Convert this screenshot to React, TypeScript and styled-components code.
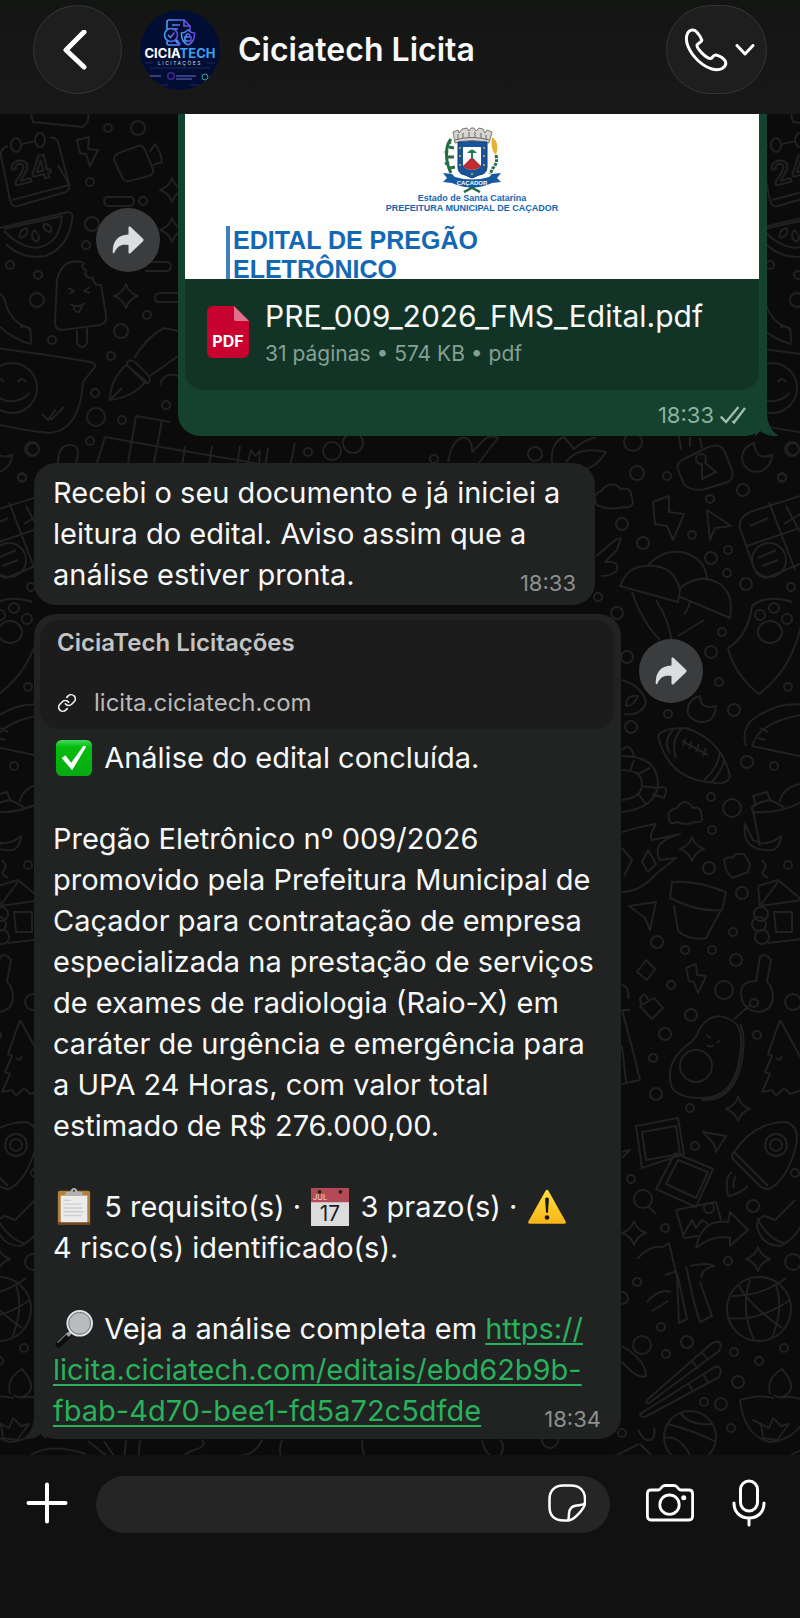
import styled, { createGlobalStyle } from "styled-components";
import { Link as LinkGlyph } from "lucide-react";

function App() {
    return (
        <>
            <GlobalStyle/>
            <Page>
                <Header>
                    <RoundButton aria-label="Voltar">
                        <BackIcon/>
                    </RoundButton>
                    <Avatar/>
                    <Title>Ciciatech Licita</Title>
                    <RoundButton $wide aria-label="Ligar">
                        <PhoneIcon/>
                        <ChevronIcon/>
                    </RoundButton>
                </Header>
                <Chat>
                    <Wallpaper/>
                    <Row $mine>
                        <ForwardButton $offset={94} aria-label="Encaminhar documento">
                            <ForwardIcon/>
                        </ForwardButton>
                        <SentBubble>
                            <DocumentPreview>
                                <Crest/>
                                <DocumentOrg>Estado de Santa Catarina</DocumentOrg>
                                <DocumentOrg>PREFEITURA MUNICIPAL DE CAÇADOR</DocumentOrg>
                                <DocumentTitle>EDITAL DE PREGÃO<br/>ELETRÔNICO</DocumentTitle>
                            </DocumentPreview>
                            <FileCard>
                                <PdfIcon/>
                                <FileInfo>
                                    <FileName>PRE_009_2026_FMS_Edital.pdf</FileName>
                                    <FileMeta>31 páginas • 574 KB • pdf</FileMeta>
                                </FileInfo>
                            </FileCard>
                            <SentStatus>
                                <time>18:33</time>
                                <ChecksIcon/>
                            </SentStatus>
                            <Tail $side="right"/>
                        </SentBubble>
                    </Row>
                    <Row>
                        <TextBubble>
                            <Paragraph>
                                Recebi o seu documento e já iniciei a<br/>
                                leitura do edital. Aviso assim que a<br/>
                                análise estiver pronta.
                                <Time>18:33</Time>
                            </Paragraph>
                        </TextBubble>
                    </Row>
                    <Row>
                        <LinkBubble>
                            <LinkCard>
                                <LinkTitle>CiciaTech Licitações</LinkTitle>
                                <LinkHost>
                                    <LinkGlyph size={20} color="#f0f0f0"/>
                                    licita.ciciatech.com
                                </LinkHost>
                            </LinkCard>
                            <MessageBody>
                                <Paragraph><CheckEmoji/> Análise do edital concluída.</Paragraph>
                                <Paragraph>
                                    Pregão Eletrônico nº 009/2026<br/>
                                    promovido pela Prefeitura Municipal de<br/>
                                    Caçador para contratação de empresa<br/>
                                    especializada na prestação de serviços<br/>
                                    de exames de radiologia (Raio-X) em<br/>
                                    caráter de urgência e emergência para<br/>
                                    a UPA 24 Horas, com valor total<br/>
                                    estimado de R$ 276.000,00.
                                </Paragraph>
                                <Paragraph>
                                    <ClipboardEmoji/> 5 requisito(s) · <CalendarEmoji/> 3 prazo(s) · <WarningEmoji/><br/>
                                    4 risco(s) identificado(s).
                                </Paragraph>
                                <Paragraph>
                                    <MagnifierEmoji/> Veja a análise completa em{" "}
                                    <Link href="https://licita.ciciatech.com/editais/ebd62b9b-fbab-4d70-bee1-fd5a72c5dfde">
                                        https://<br/>licita.ciciatech.com/editais/ebd62b9b-<br/>fbab-4d70-bee1-fd5a72c5dfde
                                    </Link>
                                    <Time>18:34</Time>
                                </Paragraph>
                            </MessageBody>
                            <Tail $side="left"/>
                        </LinkBubble>
                        <ForwardButton $offset={25} aria-label="Encaminhar mensagem">
                            <ForwardIcon/>
                        </ForwardButton>
                    </Row>
                </Chat>
                <Composer>
                    <IconButton aria-label="Anexar">
                        <PlusIcon/>
                    </IconButton>
                    <InputPill>
                        <MessageInput aria-label="Mensagem"/>
                        <IconButton aria-label="Figurinhas">
                            <StickerIcon/>
                        </IconButton>
                    </InputPill>
                    <Tools>
                        <IconButton aria-label="Câmera">
                            <CameraIcon/>
                        </IconButton>
                        <IconButton aria-label="Gravar áudio">
                            <MicIcon/>
                        </IconButton>
                    </Tools>
                </Composer>
            </Page>
        </>
    )
}

export default App

// icons

const BackIcon = () => (
    <svg width="30" height="40" viewBox="0 0 30 40" fill="none" stroke="#fff" strokeWidth="5" strokeLinecap="round" strokeLinejoin="round">
        <path d="M21 2 3 20l18 17"/>
    </svg>
)

const PhoneIcon = () => (
    <svg width="44" height="44" viewBox="0 0 44 44" fill="none" stroke="#fff" strokeWidth="3" strokeLinejoin="round">
        <path d="M4 4.500C6 2 9.500 .8 12.500 3.800C15 6.500 17 9.600 17.800 12C18.300 14 13 15.500 13 17.500C13 21 22.500 30.600 26.500 30.600C28.500 30.600 29 26.500 32 27C35.500 27.600 40 30.500 41.300 33.200C42.600 36 41 38.500 38.500 40.300C33 43.500 24 41.500 14.500 33C5 24 -.5 12 4 4.500Z"/>
    </svg>
)

const ChevronIcon = () => (
    <svg width="20" height="12" viewBox="0 0 20 12" fill="none" stroke="#fff" strokeWidth="3" strokeLinecap="round" strokeLinejoin="round">
        <path d="m2 1.500 8 8.500 8-8.500"/>
    </svg>
)

const ForwardIcon = () => (
    <svg width="32" height="28" viewBox="0 0 32 28" fill="#dcdddf">
        <path d="M16.500 1.500c0-1 1-1.500 2-.7l12.500 12c.8.800.8 1.600 0 2.400l-12.500 12c-1 .800-2 .3-2-.7v-7.500C9 18 5.500 20 2.500 26.500c-.6 1.200-1.800.9-1.800-.5C.7 16 5 9 16.500 8.500z"/>
    </svg>
)

const ChecksIcon = () => (
    <svg width="26" height="18" viewBox="0 0 26 18" fill="none" stroke="#9fbcae" strokeWidth="2.400">
        <path d="M.8 10.500 6 16 18.500 1M12.500 15l1.500 1.500L25 2"/>
    </svg>
)

const PdfIcon = () => (
    <svg width="42" height="52" viewBox="0 0 42 52">
        <path d="M6 0h21l15 15v31a6 6 0 0 1-6 6H6a6 6 0 0 1-6-6V6a6 6 0 0 1 6-6z" fill="#c8032f"/>
        <path d="M27 0l15 15H29a2 2 0 0 1-2-2z" fill="#e0718a"/>
        <text x="21" y="41" fill="#fff" fontFamily="Inter, sans-serif" fontSize="16" fontWeight="700" textAnchor="middle">PDF</text>
    </svg>
)

const PlusIcon = () => (
    <svg width="42" height="42" viewBox="0 0 42 42" stroke="#fff" strokeWidth="4" strokeLinecap="round">
        <path d="M21 2.500v37M2.500 21h37"/>
    </svg>
)

const StickerIcon = () => (
    <svg width="38" height="38" viewBox="0 0 38 38" fill="none" stroke="#fff" strokeWidth="2.500" strokeLinejoin="round">
        <path d="M20 36.500h-4C6 36.500 1.500 31 1.500 23v-8C1.500 6.500 7 1.500 15 1.500h8c8.500 0 14 5 14 13.500v4c0 5-11 17.500-17 17.500z"/>
        <path d="M20 36.500c1-1.500.8-4 1-7 .4-5 2.500-7.500 7.500-8 4-.4 7-.5 8.500-2.500"/>
    </svg>
)

const CameraIcon = () => (
    <svg width="48" height="38" viewBox="0 0 48 38" fill="none" stroke="#fff" strokeWidth="2.800" strokeLinejoin="round">
        <path d="M5 6h7c2 0 2.500-1 3.500-2.500S17.500 1.500 19 1.500h9c1.500 0 2.500.5 3.500 2S33 6 35 6h8c2.500 0 3.600 1.500 3.600 4v22c0 2.500-1.100 4-3.600 4H5c-2.500 0-3.600-1.500-3.600-4V10c0-2.500 1.100-4 3.600-4z"/>
        <circle cx="23.500" cy="20.700" r="9.700"/>
        <circle cx="37.700" cy="13.700" r="2.500" fill="#fff" stroke="none"/>
    </svg>
)

const MicIcon = () => (
    <svg width="34" height="48" viewBox="0 0 34 48" fill="none" stroke="#fff" strokeWidth="3" strokeLinecap="round">
        <rect x="8.500" y="2" width="17" height="30" rx="8.500"/>
        <path d="M2 24c0 9 6 15 15 15s15-6 15-15M17 39v7"/>
    </svg>
)

const Avatar = () => (
    <svg width="80" height="80" viewBox="0 0 80 80" role="img" aria-label="Ciciatech Licitações">
        <defs>
            <clipPath id="avatar-clip"><circle cx="40" cy="40" r="40"/></clipPath>
            <linearGradient id="avatar-line" x1="0" x2="1">
                <stop offset="0" stopColor="#3fa4f5"/>
                <stop offset="1" stopColor="#6b45e0"/>
            </linearGradient>
        </defs>
        <g clipPath="url(#avatar-clip)">
            <rect width="80" height="80" fill="#020d33"/>
            <g fill="none" stroke="url(#avatar-line)" strokeWidth="1.600">
                <path d="M27 19v-7q0-2 2-2h15l6 6v6M44 10v6h6M27 31v2q0 2 2 2h11M32 15h8M32 19h6"/>
                <circle cx="31" cy="25" r="6.500"/>
                <path d="m28 25 2.500 2.500 4-5"/>
                <path d="m36 30 4 5" strokeWidth="3"/>
                <path d="M48 20q3 3 6.500 3 .5 9-6.500 12-7-3-6.500-12 3.500 0 6.500-3z"/>
                <path d="M45 27h6v4h-6zM46 27q0-3 2-3t2 3"/>
            </g>
            <text x="40" y="48" fontFamily="Inter, sans-serif" fontSize="13" fontWeight="700" textAnchor="middle" fill="#fff">
                CICIA<tspan fill="#3fa0ee">TECH</tspan>
            </text>
            <text x="40" y="55" fontFamily="Inter, sans-serif" fontSize="5" textAnchor="middle" letterSpacing="1.500" fill="#cfd6ea">LICITAÇÕES</text>
            <path d="M5 53h8M67 53h8M10 58h60M16 75h12M50 75h12" stroke="#1c2a5c" strokeWidth="1"/>
            <path d="M8 66h13M36 66h20M36 69h16M70 66h5" stroke="#4a4f9c" strokeWidth="1.500"/>
            <rect x="28" y="63" width="6" height="6" rx="1" fill="none" stroke="#6a35c0"/>
            <circle cx="65" cy="67" r="3" fill="none" stroke="#35a9a4"/>
        </g>
    </svg>
)

const Crest = () => (
    <svg width="60" height="66" viewBox="0 0 60 66" role="img" aria-label="Brasão de Caçador">
        <path d="M11 5l5-2 1 3 3-4 5-1 2 3 2-3h3l2 3 3-3 4 1 2 4 2-3 5 2-3 11q-18-5-34 0z" fill="#d7d5d2" stroke="#5f5a57" strokeWidth=".8"/>
        <path d="M16 7v5M21 6v5M27 5v5M33 5v5M39 6v5M44 8v4M13 13q17-5 34 0" stroke="#6a6461" strokeWidth="1" fill="none"/>
        <path d="M9 12c-6 7-6 22 0 34M9 15l-4 2M7 20l5 1M6 26l-3-2M6 30l6 0M7 35l-4 2M8 41l5-1" stroke="#256c45" strokeWidth="3" fill="none"/>
        <path d="M54 28q2 8-3 13l-3 6" stroke="#256c45" strokeWidth="3" fill="none" strokeDasharray="3 1"/>
        <path d="M50 10q8 5 4 18-6-5-4-18z" fill="#e6b233"/>
        <path d="M16 15q14 0 14-1 0 1 15 1v25q0 7-8 8l-7 3-7-3q-7-1-7-8z" fill="#15549b" stroke="#123b70"/>
        <path d="M21 20h18v17q0 5-9 6-9-1-9-6z" fill="#fff"/>
        <path d="m21 39 9-9 9 9q-2 3-9 4-7-1-9-4z" fill="#c02d31"/>
        <path d="M27 24q3-3 6 0l2 2H25zM29 26h2v6h-2z" fill="#277d52"/>
        <g fill="#d9b841"><circle cx="18" cy="21" r="1"/><circle cx="18" cy="29" r="1"/><circle cx="18" cy="38" r="1"/><circle cx="42" cy="21" r="1"/><circle cx="42" cy="29" r="1"/><circle cx="42" cy="38" r="1"/><circle cx="30" cy="47" r="1"/></g>
        <path d="m22 65 15-8M38 65l-15-8" stroke="#256c45" strokeWidth="2.500"/>
        <path d="m1 46 9 1 3 3q17 5 34 0l3-3 9-1-4 5 4 4-9 1-5 2q-15 5-30 0l-5-2-9-1 4-4z" fill="#17599e"/>
        <text x="30" y="58" fontFamily="Liberation Sans, sans-serif" fontSize="6" fontWeight="700" textAnchor="middle" fill="#fff">CAÇADOR</text>
    </svg>
)

// emoji drawn at the size of a text line

const CheckEmoji = () => (
    <Emoji viewBox="0 0 40 40" aria-label="concluído">
        <defs>
            <linearGradient id="check-fill" x2="0" y2="1">
                <stop offset="0" stopColor="#45d95b"/>
                <stop offset=".2" stopColor="#05bd0d"/>
                <stop offset="1" stopColor="#08a913"/>
            </linearGradient>
        </defs>
        <rect x="1" y="1" width="38" height="38" rx="6" fill="url(#check-fill)"/>
        <path d="m7 20 4-3 6 8L30 7l3 1-15 25z" fill="#fff"/>
    </Emoji>
)

const ClipboardEmoji = () => (
    <Emoji viewBox="0 0 40 40" aria-label="requisitos">
        <rect x="3" y="3" width="34" height="36" rx="2" fill="#b1803f"/>
        <path d="M3 36h34v1q0 2-2 2H5q-2 0-2-2z" fill="#6f4720"/>
        <path d="M6 8h28v28H6z" fill="#ececec"/>
        <path d="M9 13h8M9 17h19M9 21h20M9 25h21M9 29h19" stroke="#cdcdcd" strokeWidth="1.500"/>
        <path d="M11 8V5q0-1 3-1h2q1-4 4-4t4 4h2q3 0 3 1v3z" fill="#aeb2b5"/>
        <circle cx="20" cy="3" r="1.200" fill="#444"/>
    </Emoji>
)

const CalendarEmoji = () => (
    <Emoji viewBox="0 0 40 40" aria-label="prazos">
        <path d="M0 0h40v40H0z" fill="#dcdcdc"/>
        <path d="M0 0h40v15H0z" fill="#b34b56"/>
        <circle cx="9" cy="4" r="2" fill="#222"/>
        <circle cx="31" cy="4" r="2" fill="#222"/>
        <text x="2" y="13" fontFamily="Inter, sans-serif" fontSize="8" fill="#f3dcdf">JUL</text>
        <text x="20" y="35" fontFamily="Inter, sans-serif" fontSize="22" textAnchor="middle" fill="#1d1d1d">17</text>
    </Emoji>
)

const WarningEmoji = () => (
    <Emoji viewBox="0 0 40 40" aria-label="riscos">
        <defs>
            <linearGradient id="warning-fill" x2="0" y2="1">
                <stop offset="0" stopColor="#ffe03c"/>
                <stop offset="1" stopColor="#f8b518"/>
            </linearGradient>
        </defs>
        <path d="M18.500 3q1.500-2.500 3 0L39.500 35q1 2.500-1.500 2.500H2Q-.5 37.500.5 35z" fill="url(#warning-fill)"/>
        <path d="M18 11q2-2 4 0l-1 15h-2z" fill="#191708"/>
        <circle cx="20" cy="31" r="2.400" fill="#191708"/>
    </Emoji>
)

const MagnifierEmoji = () => (
    <Emoji viewBox="0 0 40 40" aria-label="busca">
        <path d="m4 36 11-11" stroke="#0c0c0e" strokeWidth="7" strokeLinecap="round"/>
        <path d="m3 34 10-10" stroke="#6d7075" strokeWidth="1.500" strokeLinecap="round"/>
        <path d="m13 27 4-4" stroke="#9b9ea2" strokeWidth="4"/>
        <circle cx="26" cy="14" r="13" fill="#b9bbbc" stroke="#dfe3e8" strokeWidth="2"/>
        <circle cx="26" cy="14" r="11.500" fill="none" stroke="#6f757b" strokeWidth="1"/>
    </Emoji>
)

// chat background: outlined doodles that repeat every 760px

const dots = [
    [108, 128, 4], [138, 128, 7], [90, 182, 4], [143, 201, 4], [92, 224, 7], [86, 245, 4], [10, 265, 4],
    [38, 275, 4], [37, 300, 7], [147, 315, 4], [121, 331, 7], [52, 340, 4], [111, 356, 4], [95, 393, 4],
    [96, 417, 9], [166, 405, 4], [122, 420, 4], [90, 441, 4], [32, 449, 7], [22, 477, 4], [308, 452, 4],
    [332, 451, 9], [353, 443, 10], [434, 459, 4], [535, 454, 7], [633, 442, 9], [637, 473, 7], [667, 476, 4],
    [710, 499, 4], [743, 490, 6], [782, 478, 4], [793, 449, 6], [622, 524, 6], [643, 543, 6], [692, 535, 4],
    [728, 550, 4], [711, 558, 6], [727, 573, 4], [746, 584, 6], [791, 587, 4], [598, 597, 4], [617, 613, 6],
    [711, 652, 6], [722, 632, 4], [627, 657, 6], [719, 682, 4], [788, 687, 4], [668, 714, 4], [734, 710, 6],
    [631, 727, 6], [747, 762, 6], [774, 766, 4], [711, 797, 4], [732, 808, 9], [712, 830, 4], [709, 868, 6],
    [788, 865, 4], [742, 893, 6], [733, 932, 4], [657, 942, 6], [685, 950, 4], [712, 950, 4], [736, 960, 6],
    [671, 985, 4], [724, 990, 9], [691, 1015, 6], [665, 1034, 6], [653, 1058, 4], [656, 1094, 6], [690, 1108, 4],
    [757, 1035, 4], [793, 1002, 8], [695, 1146, 4], [631, 1179, 4], [753, 1206, 6], [665, 1228, 4], [728, 1261, 4],
    [795, 1173, 4], [637, 1282, 4], [793, 1262, 8], [661, 1327, 4], [687, 1342, 6], [666, 1354, 4], [734, 1352, 4],
    [784, 1348, 4], [759, 1361, 4], [738, 1382, 6], [704, 1402, 4], [721, 1404, 6], [731, 1428, 4], [622, 1433, 4],
    [642, 1345, 9], [622, 1298, 6], [550, 1440, 8],
]

const sparkles = [[126, 296], [172, 190], [172, 230], [692, 849], [738, 1109], [634, 1233], [758, 1259]]

const doodles = [
    // phone, calendar, bolt, video camera
    "M31 114l2 8 50 5q7-5 5-14M8 146Q0 148 1 156L10 200Q12 208 18 206L66 192Q70 190 69 184L58 142Q56 137 50 138M36 141l-14 3M12 200l57-15M58 165l11 19",
    "M77 140l12-3-1 12 10 1-8 16-4-12-6-1zM114 160q0-5 5-7l19-7q5-1 7 4l8 19q1 5-4 7l-20 5q-5 1-7-4zM150 152l5-8q6 8 7 18l-9 3M108 197h22q4 0 4 4t-4 5h-22q-4-1-4-5t4-4z",
    // watermelon, popsicle
    "M-10 230L68 212Q74 212 72 220Q68 248 45 256Q22 260 6 244M4 229L62 216Q60 245 35 248Q18 246 4 231M20 238q-2-8 7-10 2 8-7 10M37 242q-8-4-3-12 8 6 3 12M51 232q-9-1-7-8 9 0 7 8",
    "M82 262Q62 258 57 280L55 322Q55 330 62 330L100 325Q108 323 106 315L101 285Q94 286 93 278Q83 278 86 270Q80 268 84 262M77 330v12q1 5 5 5q4 0 5-5v-14M68 288l6 3-5 3M90 287l-6 4 6 2M70 304q9 5 15-1M74 305v4q5 8 8-4",
    "M145 262h22q4 0 4 4t-4 5h-22M178 293h-18q-5 0-5 5t5 4h18",
    // chilli, pen, chat bubble
    "M-6 290q6 2 10 8Q10 324 30 328Q32 342 30 344Q6 336-6 320M20 327q8-2 10 4",
    "M110 400q0-20 16-35l20 16q-12 16-36 19zM110 400l12-12M127 362q4-3 8 0l13 13q4 5 0 8l-3 0-18-18zM134 358q14-22 30-30l14 3M150 376l28-20M160 385q4-14 18-9",
    "M-4 348Q70 358 90 362Q98 364 94 368L83 382Q80 430 50 433Q20 430-4 424M37 388a25 25 0 1 1-50 0 25 25 0 1 1 50 0M18 382q4-6 8 0M-4 382q4-6 8 0M-4 396q18 12 34-3M42 414l6 6 8-11M48 418l4 1 12-12",
    // letter tiles and petals between bubbles
    "M136 416l34 6M105 437l50 9 140 24M136 416l-8 47M162 420l-8 43M105 437l-8 26M185 446l-3 20M212 446l-3 20M240 446l-3 20M268 448l-3 20M295 443l-6 28M248 462l3-12 4 6 5-5-1 12M58 463q0-18 12-18t6 18",
    "M448 462q4-22 14-24t10 14l12-12q6-6 14-2l-20 26M552 463q-2-20 12-26l10 12q14-12 22-11M566 462q12-16 40-10-10 16-24 18",
    // padlock, moon, cloud, bolt, cursor
    "M678 470q-2-6 4-10l24-12q12-6 18 2l8 20q2 8-4 12l-26 8q-14 0-18-6zM681 450l-2-14M700 438l2 10M690 447v-10M696 459a5 5 0 1 1 10 0l-1 4 11 9-14 7 0-15q-6 0-6-5zM754 443q-12 4-12 16 4 16 20 12 10-6 10-16-16 6-18-12z",
    "M597 505q-6-10 4-14 10-12 20-2 10-2 10 6 6 14-8 12-14 4-26-2zM653 502l16-6 0 16 15 2-11 26-6-14-12-2zM707 510l24 16-16 2-5 12z",
    // board game, umbrellas
    "M800 496l-50 16q-12 6-10 16l14 40q2 8 12 10l34-14M769 502l26 68M747 546l53-18M750 526l18-8M786 506l14 26M784 524l16-10M752 560a17 17 0 1 0 34 0 17 17 0 1 0-34 0M758 558l18-8M762 566l16-6",
    "M620 586q8-20 26-20 28-2 34 24l-2 12-58-16zM648 566q12-16 34-14 24 6 25 28M680 588q20-16 40-4 14 10 10 34l-52-22M632 592q10 30 28 48M656 600q14 22 16 44M704 620l-26 16M690 602q-2 8-6 12M596 556l10-8q10-10 15-10l-4 12-12 12q14-2 12 8-4 6-16 6",
    // paw, taco, moon, football
    "M752 606q-4 30-24 42 6 26 31 46 32-24 42-68M752 606q14-12 40-4M755 615a5 5 0 1 0 10 0 5 5 0 1 0-10 0M769 608a5 5 0 1 0 10 0 5 5 0 1 0-10 0M782 619a5 5 0 1 0 10 0 5 5 0 1 0-10 0M758 632a12 11 0 1 0 24 0 12 11 0 1 0-24 0",
    "M746 746q-6-20 12-30 24-16 52-10M752 746q8-26 56-32M752 746l56 12M760 728l8 4M758 738l8 2M700 696q-14 4-12 18 8 12 22 6 6-6 6-14-16 4-16-10z",
    "M658 736q4-8 28-8 36 12 44 48-2 10-22 6-40-4-50-46zM674 729q-12 12-4 24M682 728q-12 14-6 30M704 780q14-12 16-28M712 782q12-14 12-24M682 741l26 14M686 738l-3 8M692 741l-3 8M699 744l-3 8M706 748l-3 8",
    // lips, turtle, cloud
    "M622 680q20 6 24 22-4 14-22 12M626 706q0-12 12-10-4 10-12 10M622 756q36 0 36 28-2 24-36 28M622 770q20 0 20 14t-20 16M622 750q8-8 12 6M658 788q12-4 6 10l-12-4M634 760l-4 12M650 768l-12 6M656 788l-14-2M646 804l-8-10M669 818q-2-8 8-10 8-12 16 0 8-2 8 6 4 10-6 8-10 4-18 0-8 4-8-4z",
    // fish, bag, cabin
    "M622 832q20-6 34-8-8 14-4 16l28-6q-30 8-20 26l16-2-20 16q-16 18-34 18M622 848l10 12-8 16M648 850l8 14-8 8-6-10zM756 806l-3-10 14-4 4 10M752 810q-2-6 18-10 10 4 14 8M753 812q26 2 48-10M752 806l8 40M745 824q-4 28 28 26 8-4 8-14-14 12-28 4zM780 802q2-14 20-18",
    "M726 870l-2-10q4-4 8-2l4-4 8 0 6 10-2 8-16 6zM762 860q6 6 2 10t4 8M758 886l20-6 24 20M758 886l2 20 42-6M760 906l18-24M754 914a7 7 0 1 0 14 0 7 7 0 1 0-14 0M752 924a7 7 0 1 0 14 0 7 7 0 1 0-14 0M755 937a7 7 0 1 0 14 0 7 7 0 1 0-14 0M774 912h18v20h-16zM768 943l34-4",
    // pot, cursors, diamond, bolt, key
    "M672 882q24-2 54 10l-4 18q-26 2-52-12zM674 905l4 26q12 10 28 7l15-28M629 906l27-4-6 28-5-12zM646 960l9 9-8 11-10-8zM686 968l10-4 1 11 9 1-8 17-4-11-5-1zM760 957l-4 24q-16 0-15 14 2 16 18 17 14-2 14-16-1-10-6-14l4-22q-6-8-11-3zM750 1003a4 4 0 1 0 8 0 4 4 0 1 0-8 0M750 1005l-16 14M622 985q8 2 6 14M622 1010l8 0M640 1006l14-8 9 10-11 11zM642 1004q-4-4 0-8t6 4",
    // avocado, tree, milk box
    "M672 1088q-8-24 14-42 10-6 14-18 14-20 34-6 10 6 6 34-6 44-40 42-20 0-28-10zM740 1024q6 10 2 36-8 42-40 40M680 1066a16 16 0 1 0 32 0 16 16 0 1 0-32 0M706 1035l5 3M720 1040l-3 3M707 1045q3 3 7 0M780 1020l22 40M780 1020l-12 34 4 2-7 16 5 2-8 18 10-2 4 6 8-8 6 6 12-4M776 1058q4 4 6-2M622 1010q10 36 18 70l-18 4M622 1046l4 36",
    "M703 1132l23 4-10 16-2-8zM636 1126l42-8 6 36-42 14zM642 1132l34-6 4 28-34 6zM675 1153l38 16-17 38-40-18zM678 1160l30 12-12 26-30-14zM622 1152l8-2-8 8",
    // rocket, magnifier, image, arrow
    "M734 1152q20-30 52-30 14 4 10 24-8 30-22 40-6 6-14 0l-26-26q-4-4 0-8zM734 1152l34 34M765 1145a11 11 0 1 0 22 0 11 11 0 1 0-22 0M770 1145a6 6 0 1 0 12 0 6 6 0 1 0-12 0M732 1172q-8 6-4 24 12-2 20-10M736 1176q-4 6-2 12M634 1199a9 9 0 1 0 18 0 9 9 0 1 0-18 0M648 1206l8 8",
    "M676 1210l40-8 5 18M676 1210l8 28 14-2M684 1234l8-14 4 8 6-8 6 4M704 1208a5 5 0 1 0 10 0 5 5 0 1 0-10 0M696 1248q6-30 32-26l2-10 18 18-18 16 0-8q-16-4-34 10zM757 1226q0-8 8-10l10 4 20-20M757 1226q4 20 24 20 14-8 20-20M757 1218q10 20 28 26",
    // bamboo, ball
    "M637 1259q12-14 26-12l6-4 8 34 2 46 8-4-10-46M647 1302q12-14 24-10M652 1311l16-10M665 1275l12-4M686 1266l8 36 6 20 12-6-12-34M690 1266q18-4 24 0-14 4-12 12",
    "M727 1309a32 32 0 1 0 64 0 32 32 0 1 0-64 0M732 1296q30 0 54-18M728 1318q30 4 62-18M738 1284q10 20 44 44M750 1280q-10 30 4 60M776 1284q8 24-4 54",
    // chopsticks, lamp, basketball, tulip
    "M647 1400l64-56q8-6 10 2l-2 5-70 52q-4 0-2-3zM640 1414l70-44q10-8 11 2l-2 5-74 40q-5 0-5-3zM692 1361l6 8M702 1352l6 8M688 1383l5 8M703 1374l5 8",
    "M740 1400q18-6 34-2M780 1398q20-4 30 8M740 1400q4 36 30 42 24-2 36-24M770 1394q-4-16 12-25 16 18 4 26-8 4-12 0M753 1420l8 4 2 14 14 2 12-16-8 2-8-8-4 10zM664 1437a26 26 0 1 0 52 0 26 26 0 1 0-52 0M668 1424q30 8 48 18M680 1412q8 14 32 12M664 1438q18-4 30 26M615 1456l24-12M638 1430q6 12 12 10 6-2 4-12M640 1444l14 14",
    "M622 1346q24 14 24 30-8 4-24-14M30 1456q18-14 56-2M88 1441l30 24M104 1441l16 24M126 1440l-2 20M140 1440l-2 20M202 1440q6 6-8 10t-6 10M262 1440q-6 14-22 16M282 1440q-4 10 0 20M362 1440q0 12 4 20M482 1440q4 20 18 16 6-10 0-16",
]

const Wallpaper = () => (
    <Backdrop viewBox="0 114 800 1341" preserveAspectRatio="xMinYMin slice" aria-hidden="true">
        <g id="doodles" fill="none" stroke="#212121" strokeWidth="2" strokeLinejoin="round">
            {doodles.map((d, i) => <path key={i} d={d}/>)}
            {dots.map(([x, y, r], i) => <circle key={i} cx={x} cy={y} r={r}/>)}
            {sparkles.map(([x, y], i) => (
                <path key={i} d={`M${x} ${y - 12}q3 9 12 12q-9 3-12 12q-3-9-12-12q9-3 12-12z`}/>
            ))}
            <ellipse cx="16" cy="145" rx="5" ry="7"/>
            <ellipse cx="40" cy="140" rx="5" ry="7"/>
            <text x="14" y="186" fontFamily="Inter, sans-serif" fontSize="32" fontWeight="600" transform="rotate(-14 14 186)">24</text>
        </g>
        <use href="#doodles" x="760"/>
        <use href="#doodles" x="-760"/>
    </Backdrop>
)

const Tail = ({ $side }: { $side: "left" | "right" }) => (
    <TailSvg $side={$side} viewBox="0 0 24 24" aria-hidden="true">
        <path d="M0 0h12q0 17 12 24-11 1-19-5-2 3-5 5z"/>
    </TailSvg>
)

const GlobalStyle = createGlobalStyle`
    * {
        box-sizing: border-box;
    }

    body {
        margin: 0;
        background-color: #111111;
    }

    button {
        padding: 0;
        border: none;
        background: none;
        cursor: pointer;
    }

    svg {
        display: block;
        flex-shrink: 0;
    }
`

const Page = styled.div`
    min-height: 100vh;
    display: flex;
    flex-direction: column;
    color: #f7f8f8;
    font-family: Inter, "Liberation Sans", sans-serif;
`

const Header = styled.header`
    display: flex;
    align-items: center;
    gap: 18px;
    padding: 5px 33px 20px;
    background: linear-gradient(#131513, #181818);
`

const RoundButton = styled.button<{ $wide?: boolean }>`
    width: ${({ $wide }) => $wide ? 101 : 89}px;
    height: 89px;
    display: flex;
    justify-content: center;
    align-items: center;
    gap: 7px;
    flex-shrink: 0;
    padding-left: ${({ $wide }) => $wide ? 6 : 0}px;
    border: 1px solid #343635;
    border-radius: 45px;
    background-color: #1d1e1d;
`

const Title = styled.h1`
    flex: 1;
    margin: 0;
    font-size: 32px;
    line-height: 40px;
    font-weight: 600;
`

const Chat = styled.main`
    position: relative;
    flex: 1;
    padding: 0 33px 16px 34px;
    overflow: hidden;
    background-color: #0b0b0b;
`

const Backdrop = styled.svg`
    position: absolute;
    inset: 0;
    width: 100%;
    height: 100%;
`

const Row = styled.div<{ $mine?: boolean }>`
    position: relative;
    display: flex;
    justify-content: ${({ $mine }) => $mine ? "flex-end" : "flex-start"};
    align-items: flex-start;
    gap: 18px;
    margin-bottom: ${({ $mine }) => $mine ? 27 : 9}px;

    &:last-child {
        margin-bottom: 0;
    }
`

const ForwardButton = styled.button<{ $offset: number }>`
    width: 64px;
    height: 64px;
    display: flex;
    justify-content: center;
    align-items: center;
    flex-shrink: 0;
    margin-top: ${({ $offset }) => $offset}px;

    && {
        border-radius: 50%;
        background-color: #3a3c3e;
    }
`

const Bubble = styled.article`
    position: relative;
    border-radius: 22px;
    background-color: #202322;
`

const SentBubble = styled(Bubble)`
    width: 589px;
    padding: 0 8px 0 7px;
    border-radius: 0 0 22px 22px;
    background-color: #14422f;
`

const DocumentPreview = styled.div`
    height: 165px;
    display: flex;
    flex-direction: column;
    align-items: center;
    padding-top: 13px;
    overflow: hidden;
    background-color: #fefefe;
    color: #1467b3;
    font-family: "Liberation Sans", sans-serif;
    font-weight: bold;
`

const DocumentOrg = styled.div`
    font-size: 9px;
    line-height: 10px;
`

const DocumentTitle = styled.div`
    align-self: stretch;
    flex-shrink: 0;
    margin: 13px 41px 0;
    padding-left: 3px;
    border-left: 4px solid #3d80bd;
    font-size: 25px;
    line-height: 29px;
`

const FileCard = styled.div`
    height: 111px;
    display: flex;
    gap: 16px;
    padding: 19px 22px;
    border-radius: 0 0 18px 18px;
    background-color: #123427;

    svg {
        margin-top: 8px;
    }
`

const FileInfo = styled.div`
    flex: 1;
`

const FileName = styled.div`
    font-size: 30px;
    line-height: 37px;
`

const FileMeta = styled.div`
    color: #84a092;
    font-size: 21px;
    line-height: 37px;
`

const SentStatus = styled.div`
    display: flex;
    justify-content: flex-end;
    align-items: center;
    gap: 6px;
    height: 46px;
    padding: 3px 13px 0 0;
    color: #8db09f;
    font-size: 22px;
    line-height: 26px;
`

const TextBubble = styled(Bubble)`
    width: 561px;
    padding: 9px 19px 10px;
`

const LinkBubble = styled(Bubble)`
    width: 587px;
    padding: 6px 7px 8px 6px;
`

const LinkCard = styled.div`
    display: flex;
    flex-direction: column;
    gap: 30px;
    padding: 8px 17px 11px;
    border-radius: 18px;
    background-color: #1c1c1c;
`

const LinkTitle = styled.div`
    color: #c4c4c4;
    font-size: 24px;
    line-height: 30px;
    font-weight: 600;
`

const LinkHost = styled.div`
    display: flex;
    align-items: center;
    gap: 17px;
    color: #b9b9b9;
    font-size: 24px;
    line-height: 30px;
`

const MessageBody = styled.div`
    display: flex;
    flex-direction: column;
    gap: 40px;
    padding: 8px 13px 0;
`

const Paragraph = styled.p`
    margin: 0;
    font-size: 29px;
    line-height: 41px;
    white-space: nowrap;
`

const Time = styled.time`
    float: right;
    margin-top: 17px;
    color: #8d8f8e;
    font-size: 22px;
    line-height: 24px;
`

const Emoji = styled.svg.attrs({ role: "img" })`
    display: inline-block;
    width: 38px;
    height: 38px;
    margin: -6px 3px -6px 2px;
    vertical-align: -3px;
`

const Link = styled.a`
    color: #29b15c;
    text-decoration: underline;
    text-decoration-thickness: 2px;
    text-underline-offset: 4px;
`

const TailSvg = styled.svg<{ $side: "left" | "right" }>`
    position: absolute;
    bottom: 0;
    ${({ $side }) => $side}: -12px;
    width: 24px;
    height: 24px;
    fill: ${({ $side }) => $side === "right" ? "#14422f" : "#202322"};
    transform: ${({ $side }) => $side === "left" ? "scaleX(-1)" : "none"};
`

const Composer = styled.footer`
    display: flex;
    align-items: center;
    gap: 28px;
    padding: 21px 34px 85px 26px;
    background-color: #111111;
`

const IconButton = styled.button`
    flex-shrink: 0;
    padding-bottom: 3px;
`

const InputPill = styled.div`
    height: 57px;
    display: flex;
    align-items: center;
    flex: 1;
    min-width: 0;
    padding: 0 24px;
    border-radius: 29px;
    background-color: #252525;
`

const MessageInput = styled.input`
    flex: 1;
    min-width: 0;
    border: none;
    outline: none;
    background: none;
    color: inherit;
    font-family: inherit;
    font-size: 29px;
`

const Tools = styled.div`
    display: flex;
    align-items: center;
    gap: 38px;
    padding-left: 8px;
`
